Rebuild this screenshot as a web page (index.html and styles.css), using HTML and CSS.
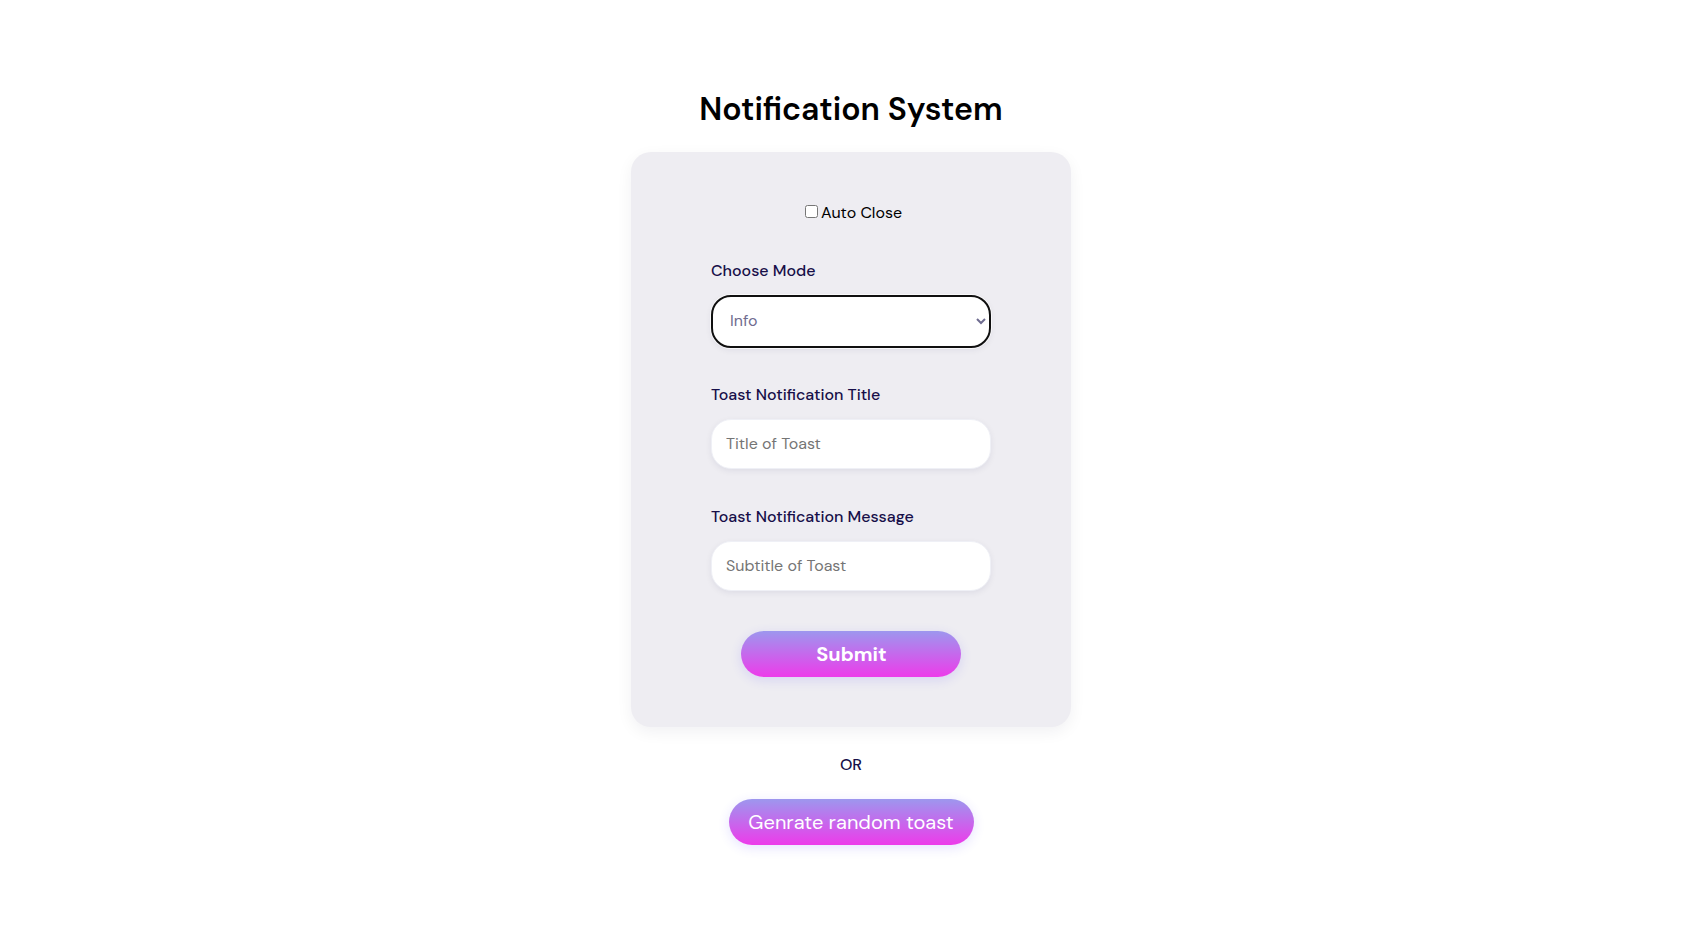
FILE: index.html
```html
<!DOCTYPE html>
<html lang="en">
<head>
<meta charset="utf-8">
<title>Notification System</title>
<link rel="stylesheet" href="styles.css">
</head>
<body>
<main class="page">
  <h1 class="title">Notification System</h1>
  <form class="card">
    <label class="auto-close"><input class="check" type="checkbox"><span class="auto-text">Auto Close</span></label>
    <div class="field field-mode">
      <label class="label label-mode" for="mode">Choose Mode</label>
      <select class="control select" id="mode"><option>Info</option><option>Success</option><option>Warning</option><option>Error</option></select>
    </div>
    <div class="field field-title">
      <label class="label label-title" for="title">Toast Notification Title</label>
      <input class="control input" id="title" type="text" placeholder="Title of Toast">
    </div>
    <div class="field field-message">
      <label class="label label-message" for="message">Toast Notification Message</label>
      <input class="control input input-message" id="message" type="text" placeholder="Subtitle of Toast">
    </div>
    <button class="button submit" type="button">Submit</button>
  </form>
  <div class="or">OR</div>
  <button class="button random" type="button">Genrate random toast</button>
</main>
</body>
</html>
```
FILE: styles.css
```css
* { box-sizing: border-box; }
body {
  margin: 0;
  background: #fff;
  color: #000;
  font: 16px/20px "DM Sans", Inter, sans-serif;
}
.page {
  display: flex;
  flex-direction: column;
  align-items: center;
  min-height: 935px;
  padding: 89px 0 0 4px;
}
.title {
  margin: 0 0 23px;
  font-size: 32px;
  line-height: 40px;
  font-weight: 610;
  white-space: nowrap;
}
.card {
  display: flex;
  flex-direction: column;
  align-items: center;
  width: 440px;
  height: 575px;
  padding-top: 51px;
  border-radius: 20px;
  background: #eeedf2;
  box-shadow: 0 5px 16px rgba(8, 15, 52, 0.06);
}
.auto-close {
  display: flex;
  gap: 3px;
  height: 20px;
  margin: 0 0 38px 5px;
}
.check { width: 13px; height: 13px; margin: 2px 0 0; }
.field {
  display: flex;
  flex-direction: column;
  gap: 14px;
  width: 280px;
}
.field-title { margin-top: 37px; }
.field-message { margin-top: 38px; }
.label {
  color: #170f49;
  font-weight: 500;
  white-space: nowrap;
}
.control {
  width: 280px;
  border-radius: 20px;
  background: #fff;
  font: 400 16px/20px "DM Sans", Inter, sans-serif;
}
.select {
  height: 53px;
  padding: 0 0 2px 13px;
  border: 2px solid #101010;
  outline: none;
  color: #6f6c90;
  box-shadow: 0 0 0 1px rgba(255, 255, 255, 0.7), 0 2px 6px rgba(19, 18, 66, 0.07);
}
.input {
  height: 50px;
  padding: 0 14px 2px;
  border: 1px solid #eff0f6;
  box-shadow: 0 2px 6px rgba(19, 18, 66, 0.07);
}
.input::placeholder { color: #757575; }
.button {
  height: 46px;
  padding: 1px 0 0;
  border: 0;
  border-radius: 23px;
  background: linear-gradient(#9d97ee, #ed3bea);
  color: #fff;
  box-shadow: 0 3px 12px rgba(74, 58, 255, 0.14);
  font: 20px/45px "DM Sans", Inter, sans-serif;
  white-space: nowrap;
}
.submit { width: 220px; margin-top: 40px; padding-left: 1px; font-weight: 700; }
.or {
  margin: 28px 0 24px;
  color: #170f49;
  font-weight: 500;
}
.random { width: 245px; font-weight: 390; }
```
